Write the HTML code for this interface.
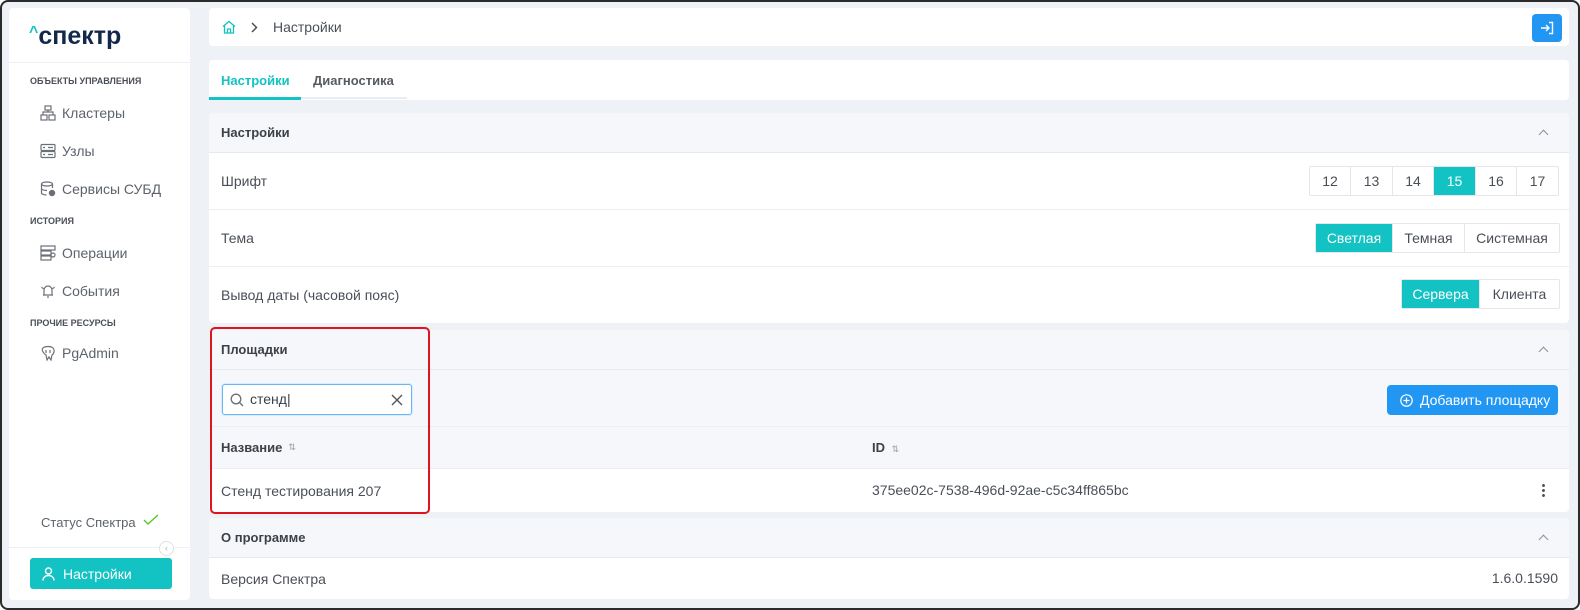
<!DOCTYPE html>
<html><head><meta charset="utf-8"><style>
*{box-sizing:border-box;margin:0;padding:0}
body{width:1580px;height:610px;overflow:hidden;background:#fff;font-family:"Liberation Sans",sans-serif;color:#3c4148;font-size:14px;position:relative}
.frame{position:absolute;left:0;top:0;width:1580px;height:610px;border:2px solid #2b2b2b;border-radius:8px;background:#eef1f6;overflow:hidden}
.a{position:absolute}
.card{position:absolute;background:#fff;border-radius:4px}
.hdr{position:absolute;left:0;right:0;background:#f6f7fa;border-bottom:1px solid #e6e9ee;font-weight:bold;font-size:13px;color:#3c4148;padding-left:12px;display:flex;align-items:center}
.row{position:absolute;left:0;right:0;border-bottom:1px solid #eceef2;display:flex;align-items:center;padding-left:12px;font-size:14px;color:#4a4f57}
.chev{position:absolute;right:22px;width:7px;height:7px;border-left:1.5px solid #8a9099;border-top:1.5px solid #8a9099;transform:rotate(45deg)}
.seg{position:absolute;display:flex;height:30px;border:1px solid #e3e6eb;border-radius:2px}
.seg div{display:flex;align-items:center;justify-content:center;border-right:1px solid #e3e6eb;font-size:14px;color:#4a4f57}
.seg div:last-child{border-right:none}
.seg .on{background:#13c2c2;color:#fff}
.sec{position:absolute;left:28px;font-size:9px;font-weight:bold;color:#4a4f57}
.item{position:absolute;left:38px;display:flex;align-items:center;gap:6px;font-size:14px;color:#5d636b}
.ic{width:16px;height:16px}
</style></head><body><div class="frame">

<div class="card" style="left:7px;top:6px;width:181px;height:592px">
  <div class="a" style="left:20px;top:14px;font-size:25px;font-weight:bold;color:#13294b"><span style="color:#13c2c2;font-size:16px;vertical-align:top;position:relative;top:2px">^</span>спектр</div>
  <div class="a" style="left:0;right:0;top:54px;border-top:1px solid #eef0f3"></div>
</div>
<div class="sec" style="top:74px">ОБЪЕКТЫ УПРАВЛЕНИЯ</div>
<div class="item" style="top:103px"><svg class="ic" viewBox="0 0 16 16" fill="none" stroke="#6b7078" stroke-width="1.2"><rect x="5" y="1" width="6" height="4"/><rect x="1" y="10" width="6" height="5"/><rect x="9" y="10" width="6" height="5"/><path d="M3 10V7h10v3M8 5v2"/></svg>Кластеры</div>
<div class="item" style="top:141px"><svg class="ic" viewBox="0 0 16 16" fill="none" stroke="#6b7078" stroke-width="1.2"><rect x="1" y="1.5" width="14" height="6" rx="1"/><rect x="1" y="8.5" width="14" height="6" rx="1"/><path d="M3 4.5h2M3 11.5h2M8 4.5h5M8 11.5h5"/></svg>Узлы</div>
<div class="item" style="top:179px"><svg class="ic" viewBox="0 0 16 16" fill="none" stroke="#6b7078" stroke-width="1.2"><ellipse cx="7" cy="3" rx="5.5" ry="2"/><path d="M1.5 3v9c0 1 2 2 5 2M12.5 3v4M1.5 7.5c0 1 2 2 5.5 2"/><circle cx="12" cy="12" r="2.6" fill="#6b7078"/></svg>Сервисы СУБД</div>
<div class="sec" style="top:214px">ИСТОРИЯ</div>
<div class="item" style="top:243px"><svg class="ic" viewBox="0 0 16 16" fill="none" stroke="#6b7078" stroke-width="1.2"><rect x="1" y="1" width="14" height="4"/><rect x="1" y="6" width="10" height="4"/><rect x="1" y="11" width="10" height="4"/><circle cx="13" cy="10" r="2"/></svg>Операции</div>
<div class="item" style="top:281px"><svg class="ic" viewBox="0 0 16 16" fill="none" stroke="#6b7078" stroke-width="1.2"><path d="M4 12V7a4 4 0 0 1 8 0v5zM3 12h10M7 14h2M1.5 4l2 2M14.5 4l-2 2"/></svg>События</div>
<div class="sec" style="top:316px">ПРОЧИЕ РЕСУРСЫ</div>
<div class="item" style="top:343px"><svg class="ic" viewBox="0 0 16 16" fill="none" stroke="#6b7078" stroke-width="1.2"><path d="M3 3c2-2 8-2 10 0 2 2 1 6-1 7l-1 5-2-3-2 3-1-5C4 9 1 5 3 3z"/><path d="M6 5v3M10 5v3"/></svg>PgAdmin</div>
<div class="a" style="left:39px;top:513px;font-size:13px;color:#5d636b">Статус Спектра</div>
<svg class="a" style="left:141px;top:512px" width="16" height="12" viewBox="0 0 16 12" fill="none" stroke="#52c41a" stroke-width="1.3"><path d="M1 6l4 4 10-9"/></svg>
<div class="a" style="left:7px;width:181px;top:545px;border-top:1px solid #eef0f3"></div>
<div class="a" style="left:157px;top:539px;width:15px;height:15px;border-radius:50%;border:1px solid #dfe2e6;background:#fff;font-size:9px;color:#b0b5bb;text-align:center;line-height:13px">‹</div>
<div class="a" style="left:28px;top:556px;width:142px;height:31px;background:#13c2c2;border-radius:3px;color:#fff;font-size:14px;display:flex;align-items:center;padding-left:12px;gap:8px"><svg width="13" height="14" viewBox="0 0 13 14" fill="none" stroke="#fff" stroke-width="1.4"><circle cx="6.5" cy="4" r="3"/><path d="M1 13.5c0-3 2.5-5 5.5-5s5.5 2 5.5 5"/></svg>Настройки</div>

<div class="card" style="left:207px;top:6px;width:1360px;height:38px">
  <svg class="a" style="left:13px;top:12px" width="14" height="14" viewBox="0 0 14 14" fill="none" stroke="#13c2c2" stroke-width="1.3"><path d="M1 6.5L7 1.5l6 5M2.5 5.5V13h9V5.5M5.5 13V9h3v4"/></svg>
  <svg class="a" style="left:41px;top:14px" width="8" height="11" viewBox="0 0 8 11" fill="none" stroke="#4a4f57" stroke-width="1.5"><path d="M2 1l4.5 4.5L2 10"/></svg>
  <div class="a" style="left:64px;top:11px;font-size:14px;color:#4a4f57">Настройки</div>
  <div class="a" style="left:1323px;top:6px;width:30px;height:28px;background:#2196f3;border-radius:4px"><svg style="margin:7px 0 0 8px" width="14" height="14" viewBox="0 0 14 14" fill="none" stroke="#fff" stroke-width="1.4"><path d="M1 7h8M6 4l3 3-3 3M9 1.5h3.5v11H9"/></svg></div>
</div>

<div class="card" style="left:207px;top:58px;width:1360px;height:40px">
  <div class="a" style="left:12px;top:13px;font-weight:bold;font-size:13px;color:#13c2c2">Настройки</div>
  <div class="a" style="left:104px;top:13px;font-weight:bold;font-size:13px;color:#555b63">Диагностика</div>
  <div class="a" style="left:0;top:37px;width:198px;height:2px;background:#e9ecf0"></div>
  <div class="a" style="left:0;top:37px;width:92px;height:3px;background:#13c2c2"></div>
</div>

<div class="card" style="left:207px;top:111px;width:1360px;height:210px;overflow:hidden">
  <div class="hdr" style="top:0;height:40px">Настройки<span class="chev" style="top:18px"></span></div>
  <div class="row" style="top:40px;height:57px">Шрифт</div>
  <div class="row" style="top:97px;height:57px">Тема</div>
  <div class="row" style="top:154px;height:56px;border-bottom:none">Вывод даты (часовой пояс)</div>
</div>
<div class="seg" style="left:1307px;top:164px"><div style="width:41px">12</div><div style="width:42px">13</div><div style="width:41px">14</div><div class="on" style="width:42px">15</div><div style="width:41px">16</div><div style="width:41px">17</div></div>
<div class="seg" style="left:1313px;top:221px"><div class="on" style="width:77px">Светлая</div><div style="width:72px">Темная</div><div style="width:94px">Системная</div></div>
<div class="seg" style="left:1399px;top:277px"><div class="on" style="width:78px">Сервера</div><div style="width:79px">Клиента</div></div>

<div class="card" style="left:207px;top:328px;width:1360px;height:182px;overflow:hidden">
  <div class="hdr" style="top:0;height:40px">Площадки<span class="chev" style="top:18px"></span></div>
  <div class="row" style="top:40px;height:57px;background:#f6f7fa"></div>
  <div class="row" style="top:97px;height:42px;background:#f6f7fa;font-weight:bold;font-size:13px;color:#3c4148">Название <span style="font-size:9px;color:#999;margin-left:6px;font-weight:normal">⇅</span><span class="a" style="left:663px;top:13px">ID <span style="font-size:9px;color:#999;margin-left:3px;font-weight:normal">⇅</span></span></div>
  <div class="row" style="top:139px;height:43px;border-bottom:none">Стенд тестирования 207<span class="a" style="left:663px;top:13px">375ee02c-7538-496d-92ae-c5c34ff865bc</span>
   <span class="a" style="left:1333px;top:14px;width:3px;height:15px;background:radial-gradient(circle,#555 1.3px,transparent 1.6px) 0 0/3px 5px"></span></div>
</div>
<div class="a" style="left:220px;top:382px;width:190px;height:31px;border:1px solid #69b5f5;border-radius:3px;background:#fff;box-shadow:0 0 0 1px #d9ecfc">
  <svg class="a" style="left:7px;top:8px" width="14" height="14" viewBox="0 0 14 14" fill="none" stroke="#6b7078" stroke-width="1.3"><circle cx="6" cy="6" r="4.8"/><path d="M9.5 9.5L13 13"/></svg>
  <div class="a" style="left:27px;top:6px;font-size:14px;color:#3c4148">стенд|</div>
  <svg class="a" style="left:168px;top:9px" width="12" height="12" viewBox="0 0 12 12" stroke="#555" stroke-width="1.4"><path d="M1 1l10 10M11 1L1 11"/></svg>
</div>
<div class="a" style="left:1385px;top:383px;width:171px;height:30px;background:#2196f3;border-radius:4px;color:#fff;font-size:14px;display:flex;align-items:center;padding-left:13px;gap:7px"><svg width="13" height="13" viewBox="0 0 13 13" fill="none" stroke="#fff" stroke-width="1.2"><circle cx="6.5" cy="6.5" r="5.7"/><path d="M6.5 3.5v6M3.5 6.5h6"/></svg>Добавить площадку</div>
<div class="a" style="left:208px;top:325px;width:220px;height:187px;border:2px solid #e0141e;border-radius:5px"></div>

<div class="card" style="left:207px;top:516px;width:1360px;height:81px;overflow:hidden">
  <div class="hdr" style="top:0;height:40px">О программе<span class="chev" style="top:18px"></span></div>
  <div class="row" style="top:40px;height:41px;border-bottom:none">Версия Спектра<span class="a" style="right:11px;top:12px">1.6.0.1590</span></div>
</div>
</div></body></html>
